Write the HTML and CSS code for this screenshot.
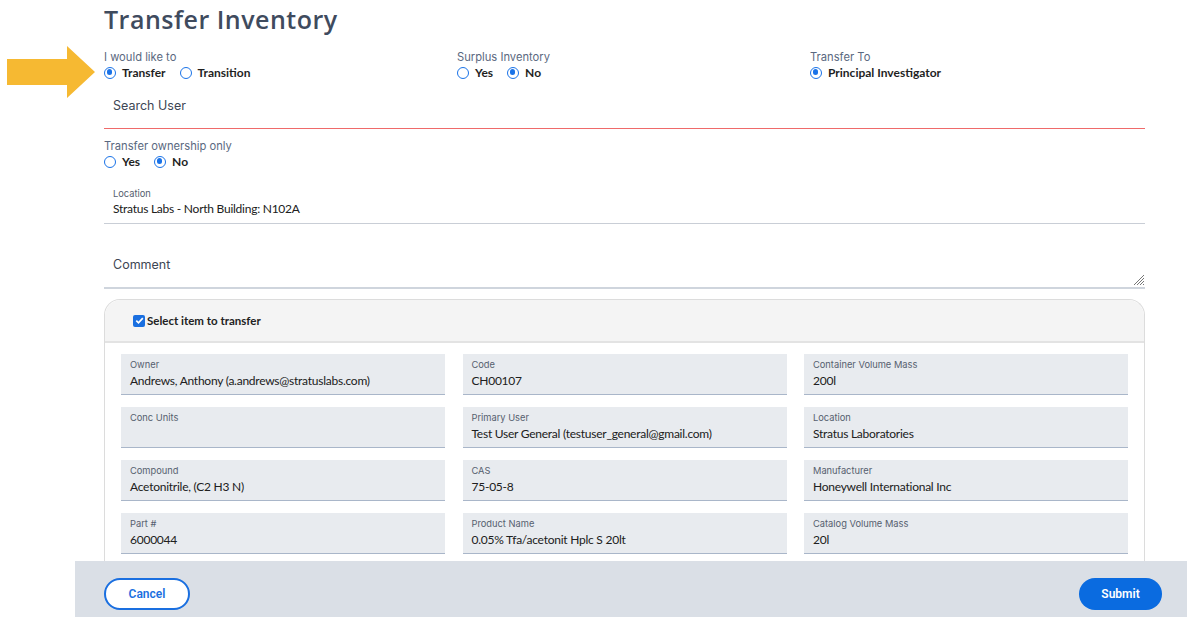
FILE: index.html
```html
<!DOCTYPE html>
<html>
<head>
<meta charset="utf-8">
<link rel="stylesheet" href="styles.css">
</head>
<body>
<div class="arrow"><svg width="90" height="52" viewBox="0 0 90 52"><polygon points="0,13 60,13 60,0 88,26 60,52 60,39 0,39" fill="#f6b932"/></svg></div>
<main class="page">
  <h1 class="title">Transfer Inventory</h1>
  <div class="options">
    <div class="group">
      <div class="glabel">I would like to</div>
      <div class="radios">
        <label class="radio"><span class="dot on"></span>Transfer</label>
        <label class="radio"><span class="dot"></span>Transition</label>
      </div>
    </div>
    <div class="group">
      <div class="glabel">Surplus Inventory</div>
      <div class="radios">
        <label class="radio"><span class="dot"></span>Yes</label>
        <label class="radio"><span class="dot on"></span>No</label>
      </div>
    </div>
    <div class="group">
      <div class="glabel">Transfer To</div>
      <div class="radios">
        <label class="radio"><span class="dot on"></span>Principal Investigator</label>
      </div>
    </div>
  </div>
  <div class="search">Search User</div>
  <div class="group owner">
    <div class="glabel">Transfer ownership only</div>
    <div class="radios">
      <label class="radio"><span class="dot"></span>Yes</label>
      <label class="radio"><span class="dot on"></span>No</label>
    </div>
  </div>
  <div class="location">
    <div class="flabel">Location</div>
    <div class="fvalue">Stratus Labs - North Building: N102A</div>
  </div>
  <div class="comment">
    <span>Comment</span>
    <svg class="grip" width="13" height="13" viewBox="0 0 13 13"><path d="M12 2 L2 12 M12 5 L5 12 M12 8 L8 12 M12 11 L11 12" stroke="#777" stroke-width="1"/></svg>
  </div>
  <section class="card">
    <div class="card-head">
      <span class="check"><svg width="11" height="11" viewBox="0 0 11 11"><path d="M2.3 5.6 L4.5 7.8 L8.8 3.2" stroke="#fff" stroke-width="1.7" fill="none"/></svg></span>
      <span class="check-label">Select item to transfer</span>
    </div>
    <div class="grid">
      <div class="field"><div class="flabel">Owner</div><div class="fvalue">Andrews, Anthony (a.andrews@stratuslabs.com)</div></div>
      <div class="field"><div class="flabel">Code</div><div class="fvalue">CH00107</div></div>
      <div class="field"><div class="flabel">Container Volume Mass</div><div class="fvalue">200l</div></div>
      <div class="field"><div class="flabel">Conc Units</div><div class="fvalue"></div></div>
      <div class="field"><div class="flabel">Primary User</div><div class="fvalue">Test User General (testuser_general@gmail.com)</div></div>
      <div class="field"><div class="flabel">Location</div><div class="fvalue">Stratus Laboratories</div></div>
      <div class="field"><div class="flabel">Compound</div><div class="fvalue">Acetonitrile, (C2 H3 N)</div></div>
      <div class="field"><div class="flabel">CAS</div><div class="fvalue">75-05-8</div></div>
      <div class="field"><div class="flabel">Manufacturer</div><div class="fvalue">Honeywell International Inc</div></div>
      <div class="field"><div class="flabel">Part #</div><div class="fvalue">6000044</div></div>
      <div class="field"><div class="flabel">Product Name</div><div class="fvalue">0.05% Tfa/acetonit Hplc S 20lt</div></div>
      <div class="field"><div class="flabel">Catalog Volume Mass</div><div class="fvalue">20l</div></div>
    </div>
  </section>
</main>
<footer class="footer">
  <button class="btn cancel">Cancel</button>
  <button class="btn submit">Submit</button>
</footer>
</body>
</html>
```
FILE: styles.css
```css
* { box-sizing: border-box; }
html, body { margin: 0; padding: 0; background: #fff; overflow: hidden; height: 617px; }
body { font-family: "Lato", "Liberation Sans", sans-serif; color: #1f1f1f; }

.arrow { position: absolute; left: 7px; top: 46px; }

.page { margin-left: 104px; width: 1041px; }

.title {
  margin: 0; padding-top: 2px;
  font-family: "Open Sans", "Noto Sans", sans-serif;
  font-weight: 600; font-size: 25px; line-height: 34px;
  color: #3f4b5e; letter-spacing: 0.5px;
}

.options { display: flex; margin-top: 14px; }
.options .group { width: 353px; flex: none; }
.glabel {
  font-family: "Inter", "Roboto", sans-serif; font-size: 11.2px; line-height: 15px;
  color: #5a6880;
}
.radios { display: flex; gap: 14px; height: 15px; align-items: center; }
.radio {
  display: flex; align-items: center; gap: 6px;
  font-family: "Lato", sans-serif; font-weight: 700; font-size: 12px; color: #1f1f1f;
}
.dot {
  width: 12px; height: 12px; border-radius: 50%; flex: none;
  border: 1.7px solid #1a73e8; background: #fff; position: relative;
}
.dot.on::after {
  content: ""; position: absolute; left: 1.5px; top: 1.5px; width: 5.6px; height: 5.6px;
  border-radius: 50%; background: #1a73e8;
}

.search {
  height: 49px; padding: 18px 0 0 9px;
  font-family: "Inter", "Roboto", sans-serif; font-size: 12.5px; color: #3d4654;
  border-bottom: 1.5px solid #ef6a6a;
}

.owner { margin-top: 10px; }

.location { margin-top: 13px; height: 42px; padding: 5px 0 0 9px; border-bottom: 1px solid #c9ced6; }
.location .fvalue { margin-top: 1px; }

.flabel { font-family: "Inter", "Roboto", sans-serif; font-size: 9.3px; line-height: 13px; color: #56606e; }
.fvalue { font-family: "Lato", sans-serif; font-size: 12px; letter-spacing: -0.25px; line-height: 16px; color: #202020; }

.comment {
  margin-top: 17px; height: 48px; padding: 16px 0 0 9px; position: relative;
  font-family: "Inter", "Roboto", sans-serif; font-size: 12.5px; color: #3d4654;
  border-bottom: 2px solid #cfd5dd;
}
.grip { position: absolute; right: 0; bottom: 1px; }

.card {
  margin-top: 10px; border: 1px solid #dcdcdc; border-bottom: none;
  border-radius: 16px 16px 0 0;
}
.card-head {
  height: 43px; background: #f4f4f4; border-bottom: 2px solid #e3e3e3;
  border-radius: 16px 16px 0 0;
  display: flex; align-items: center; padding-left: 28px; gap: 2px;
}
.check {
  width: 12px; height: 12px; border-radius: 2px; background: #1a6fe0;
  display: flex; align-items: center; justify-content: center;
}
.check-label { font-family: "Lato", sans-serif; font-weight: 700; font-size: 11.5px; color: #222; }

.grid {
  display: grid; grid-template-columns: repeat(3, 324px); column-gap: 17.5px; row-gap: 12px;
  padding: 11px 16px 20px 16px;
}
.field {
  height: 41px; background: #e8ebef; border-bottom: 1.5px solid #a9b6c9;
  padding: 4px 0 0 9px;
}
.field .fvalue { margin-top: 2px; }

.footer {
  position: fixed; left: 75px; right: 0; bottom: 0; height: 56px;
  background: #dadfe6;
  display: flex; align-items: flex-start; justify-content: space-between;
  padding: 17px 25px 0 29px;
}
.btn {
  height: 32px; border-radius: 16px; font-family: "Roboto", "Inter", sans-serif;
  font-weight: 600; font-size: 12px; cursor: pointer;
}
.cancel { width: 86px; background: #fff; border: 2px solid #1a6fe0; color: #1a6fe0; }
.submit { width: 83px; background: #0a6be0; border: none; color: #fff; }
```
